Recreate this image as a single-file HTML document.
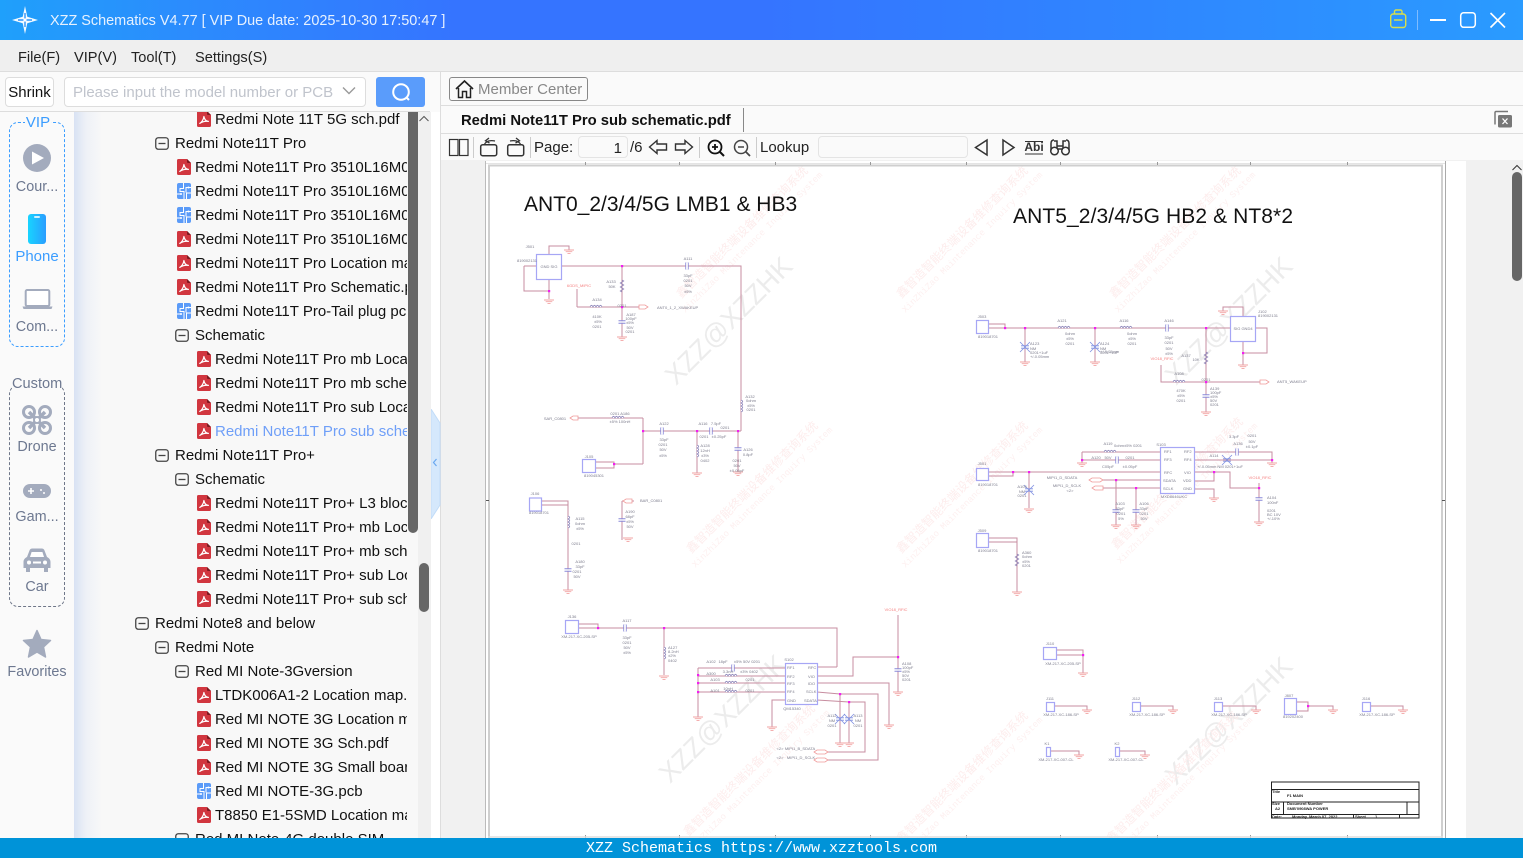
<!DOCTYPE html>
<html lang="en"><head><meta charset="utf-8"><title>XZZ Schematics</title>
<style>
html,body{margin:0;padding:0;width:1523px;height:858px;overflow:hidden;background:#fafafa;font-family:"Liberation Sans","Noto Sans CJK SC",sans-serif;font-size:15px;color:#111}
.a{position:absolute}
#title{left:0;top:0;width:1523px;height:40px;background:linear-gradient(90deg,#1fa0fb 0,#2b8cfd 12%,#3574ff 30%,#3574ff 50%,#2f86ff 75%,#2a9bff 100%)}
#ttext{left:50px;top:12px;line-height:18px;color:#e6f1ff;white-space:nowrap;font-size:14.45px}
#menu{left:0;top:40px;width:1523px;height:31px;background:#efefef;border-bottom:1px solid #ddd}
#menu span{position:absolute;top:9px;line-height:18px;color:#222;white-space:nowrap;font-size:14.6px}
#lp{left:0;top:72px;width:430px;height:39px;background:#fafafa;border-bottom:1px solid #ddd}
.bx{position:absolute;box-sizing:border-box;border:1px solid #ddd;border-radius:4px;background:#fff}
#nav{left:0;top:112px;width:74px;height:726px;background:#fafafa}
#grad{left:74px;top:112px;width:344px;height:726px;background:linear-gradient(90deg,#d8e2f3 0,#eef1f7 12px,#f8f8f8 28px)}
#tree{left:0;top:112px;width:407px;height:726px;overflow:hidden}
#tree .in{margin-top:-5px}
.r{height:24px;line-height:26px;white-space:nowrap;position:relative;color:#111}
.r svg{position:absolute;top:4px;overflow:visible}
.p0{padding-left:215px}.p0 svg{left:197px}
.p1{padding-left:195px}.p1 svg{left:177px}
.b0{padding-left:155px}.b0 svg{left:135px;top:6px}
.b1{padding-left:175px}.b1 svg{left:155px;top:6px}
.b2{padding-left:195px}.b2 svg{left:175px;top:6px}
.nl{position:absolute;left:4px;width:66px;text-align:center;line-height:18px;color:#6d7890;white-space:nowrap;font-size:14.4px}
.sep{position:absolute;top:137px;width:1px;height:21px;background:#ccc}
#status{left:0;top:838px;width:1523px;height:20px;background:#0093d8;color:#fff;text-align:center;font-family:"Liberation Mono",monospace;font-size:15px;line-height:22px;white-space:nowrap;overflow:hidden}
.t{font:4px "Liberation Sans",sans-serif;fill:#7d7d8d}
.c{text-anchor:middle}
.rd{font:4px "Liberation Sans",sans-serif;fill:#f58080;text-anchor:middle}
.wm{font:27px "Liberation Sans",sans-serif;fill:#ececec;text-anchor:middle}
.w1{font:12px "Liberation Sans","Noto Sans CJK SC",sans-serif;fill:#fdeded;text-anchor:middle}
.w2{font:9px "Liberation Mono",monospace;fill:#fdf0f0;text-anchor:middle}
.h{font:21px "Liberation Sans",sans-serif;fill:#111}
</style></head><body>

<svg width="0" height="0" style="position:absolute"><defs>
<symbol id="pdf" viewBox="0 0 14 16" width="14" height="16"><path d="M1.5 0H10L14 4V14.5A1.5 1.5 0 0 1 12.5 16H1.5A1.5 1.5 0 0 1 0 14.5V1.5A1.5 1.5 0 0 1 1.5 0Z" fill="#d1363f"/><path d="M10 0L14 4H11A1 1 0 0 1 10 3Z" fill="#7d1a20"/><path d="M2.8 12.4C4.6 11.3 6.6 8.6 6.9 5.5 7.4 8.2 9 10.2 11.4 10.4 8.8 10 5.3 10.7 2.8 12.4Z" fill="none" stroke="#fff" stroke-width="1.2" stroke-linejoin="round"/></symbol>
<symbol id="pcb" viewBox="0 0 14 16" width="14" height="16"><rect width="14" height="16" rx="2" fill="#5b9bf8"/><path d="M6.500 0V5.500H3V8.500H7V16M14 4.500H9V9.500M0 11H4M14 10H9.500V16" fill="none" stroke="#fff" stroke-width="1"/><circle cx="4" cy="11" r="1" fill="#fff"/><circle cx="11.500" cy="4.500" r="1" fill="#fff"/></symbol>
<symbol id="box" viewBox="0 0 14 13" width="14" height="13"><rect x=".75" y=".75" width="12.5" height="11.5" rx="2.5" fill="none" stroke="#444" stroke-width="1.3"/><path d="M3.5 6.5H10.5" stroke="#444" stroke-width="1.3"/></symbol>
<g id="gnd"><path d="M-5 0H5M-3.3 1.7H3.3M-1.5 3.4H1.5" stroke="#f2a3a3" stroke-width=".9" fill="none"/></g>
<g id="ind"><path d="M-6 0q1.5-3.4 3 0q1.5-3.4 3 0q1.5-3.4 3 0q1.5-3.4 3 0" stroke="#8d84b8" stroke-width=".8" fill="#fff"/></g>
<g id="res"><path d="M-6 0l1-1.7 2 3.4 2-3.4 2 3.4 2-3.4 2 3.4 1-1.7" stroke="#8d84b8" stroke-width=".8" fill="none"/></g>
<g id="cap"><path d="M-1.2-3.5V3.5M1.2-3.5V3.5" stroke="#8888d8" stroke-width="1" fill="none"/><rect x="-.8" y="-3" width="1.6" height="6" fill="#fff"/></g>
<g id="capv"><rect x="-3" y="-.8" width="6" height="1.6" fill="#fff"/><path d="M-3.5-1.2H3.5M-3.5 1.2H3.5" stroke="#8888d8" stroke-width="1" fill="none"/></g>
<g id="nm"><path d="M-5-5L5 5M5-5L-5 5M-4 -1.2H4M-4 1.2H4" stroke="#7f8fe0" stroke-width=".8" fill="none"/></g>
</defs></svg>

<!-- document area -->
<div class="a" style="left:431px;top:112px;width:9px;height:726px;background:#fff"></div>
<div class="a" style="left:440px;top:72px;width:1px;height:766px;background:#ddd"></div>
<div class="a" style="left:418px;top:112px;width:13px;height:726px;background:#f0f0f0"></div>
<div class="a" style="left:441px;top:160px;width:1082px;height:678px;background:#f1f1f1"></div>
<div class="a" style="left:485px;top:161px;width:1px;height:677px;background:#bbb"></div>
<div class="a" style="left:486px;top:161px;width:980px;height:677px;background:#fff"></div>

<svg class="a" style="left:0;top:0" width="1523" height="858" viewBox="0 0 1523 858">
<g>
<text class="wm" transform="translate(728 320) rotate(-45) translate(0 10)">XZZ@XZZHK</text>
<text class="wm" transform="translate(1228 320) rotate(-45) translate(0 10)">XZZ@XZZHK</text>
<text class="wm" transform="translate(722 718) rotate(-45) translate(0 10)">XZZ@XZZHK</text>
<text class="wm" transform="translate(1228 720) rotate(-45) translate(0 10)">XZZ@XZZHK</text>
<g transform="translate(745 235) rotate(-45)"><text class="w1">鑫智造智能终端设备维修查询系统</text><text class="w2" y="13">XinZhiZao Maintenance Inquiry System</text></g>
<g transform="translate(965 235) rotate(-45)"><text class="w1">鑫智造智能终端设备维修查询系统</text><text class="w2" y="13">XinZhiZao Maintenance Inquiry System</text></g>
<g transform="translate(1178 235) rotate(-45)"><text class="w1">鑫智造智能终端设备维修查询系统</text><text class="w2" y="13">XinZhiZao Maintenance Inquiry System</text></g>
<g transform="translate(755 490) rotate(-45)"><text class="w1">鑫智造智能终端设备维修查询系统</text><text class="w2" y="13">XinZhiZao Maintenance Inquiry System</text></g>
<g transform="translate(965 490) rotate(-45)"><text class="w1">鑫智造智能终端设备维修查询系统</text><text class="w2" y="13">XinZhiZao Maintenance Inquiry System</text></g>
<g transform="translate(1180 486) rotate(-45)"><text class="w1">鑫智造智能终端设备维修查询系统</text><text class="w2" y="13">XinZhiZao Maintenance Inquiry System</text></g>
<g transform="translate(752 773) rotate(-45)"><text class="w1">鑫智造智能终端设备维修查询系统</text><text class="w2" y="13">XinZhiZao Maintenance Inquiry System</text></g>
<g transform="translate(965 780) rotate(-45)"><text class="w1">鑫智造智能终端设备维修查询系统</text><text class="w2" y="13">XinZhiZao Maintenance Inquiry System</text></g>
<g transform="translate(1175 780) rotate(-45)"><text class="w1">鑫智造智能终端设备维修查询系统</text><text class="w2" y="13">XinZhiZao Maintenance Inquiry System</text></g>
</g>

<!-- page frame -->
<path d="M486 163.5H1446" stroke="#e4e4e4" stroke-width="1"/>
<path d="M489 166V838M1442 166V838M488 165.5H1443" stroke="#cfcfcf" stroke-width="2" fill="none"/>
<path d="M1445.5 161V838" stroke="#aaa" stroke-width="1"/>
<path d="M585.5 162v3M679.5 162v3M775.5 162v3M870.5 162v3M966.5 162v3M1060.5 162v3M1157.5 162v3M1250.5 162v3M1347.5 162v3" stroke="#999"/>
<path d="M486 500.5h3M1442 500.5h3" stroke="#555"/>
<path d="M585.5 835v3M679.5 835v3M775.5 835v3M870.5 835v3M966.5 835v3M1060.5 835v3M1157.5 835v3M1250.5 835v3M1347.5 835v3" stroke="#999"/>
<path d="M488 837H1443" stroke="#ddd" stroke-width="1.5"/>

<text class="h" x="524" y="211">ANT0_2/3/4/5G LMB1 &amp; HB3</text>
<text class="h" x="1013" y="223" textLength="280">ANT5_2/3/4/5G HB2 &amp; NT8*2</text>

<g style="filter:blur(.35px)">
<!-- wires -->
<g fill="none" stroke="#c78da0" stroke-width="1">
<path d="M562 266H741V431M524 266H536M524 266V291H549M549 279V299M549 254V246H569V250M622 266V337M577 307H643M577 289V307M643 431H741M643 418V464M643 418H577M595 462H614V464H643M595 468H614V464M697 431V473M738 431V472"/>
<path d="M541 501H568V590M541 505H568M622 501H634M622 501V540"/>
<path d="M988 324H1005V328M988 328H1230M1025 328V362M1095 328V362M1256 328H1267V353H1243M1243 341V365M1243 316V307H1223V311M1206 328V412M1161 365V382H1260"/>
<path d="M988 472H1160M988 476H1013V472M1029 472V508M1082 452H1160M1082 452V463M1082 460H1160M1103 480H1160M1103 488H1160M1116 480V525M1136 488V525M1194 452H1272V463M1194 460H1272M1194 472H1230V488H1259M1194 481H1214V472M1194 489H1214V498M1259 483V522"/>
<path d="M988 538H1017V592M988 542H1017"/>
<path d="M578 624H598V628M578 628H837V667M664 628V675M698 668H785M698 668V717M698 676H785M698 683H785M698 692H785M785 700H772V727M817 667H837M817 676H853V657H898M898 615V692M817 683H889V725M817 692L840 694H878V760H825M817 700L849 702H865V752H825M840 694V743M849 702V743"/>
<path d="M1057 650H1083V673M1057 655H1083M1054 706H1087V710M1141 706H1173V710M1223 706H1256V710M1297 702H1308V711H1297M1308 706H1333V710M1371 706H1403V710M1051 751H1079V755M1120 751H1145V755"/>
</g>
<!-- component boxes -->
<g fill="#fff" stroke="#a6a6f5" stroke-width="1.2">
<rect x="536.5" y="254.5" width="25" height="25"/><rect x="582.5" y="459.5" width="13" height="13"/><rect x="529.5" y="498" width="12" height="13"/>
<rect x="976.5" y="320.5" width="12" height="13"/><rect x="1230.5" y="316.5" width="25" height="25"/><rect x="976.5" y="468.5" width="12" height="12"/><rect x="1160.5" y="447.5" width="34" height="46"/><rect x="976.5" y="533.5" width="12" height="14"/>
<rect x="565.5" y="620.5" width="13" height="13"/><rect x="785.5" y="663.5" width="32" height="41"/>
<rect x="1043.5" y="647.5" width="13" height="12"/><rect x="1046.5" y="702.5" width="8" height="9"/><rect x="1132.5" y="702.5" width="8" height="9"/><rect x="1214.5" y="702.5" width="8" height="9"/><rect x="1284.5" y="698.5" width="12" height="16"/><rect x="1362.5" y="702.5" width="8" height="9"/><rect x="1046.5" y="747.5" width="4" height="9"/><rect x="1115.5" y="747.5" width="4" height="9"/>
</g>
<!-- grounds -->
<g>
<use href="#gnd" x="549" y="300"/><use href="#gnd" x="569" y="250"/><use href="#gnd" x="622" y="337"/><use href="#gnd" x="697" y="473"/><use href="#gnd" x="738" y="472"/><use href="#gnd" x="568" y="590"/><use href="#gnd" x="628" y="538"/>
<use href="#gnd" x="1025" y="362"/><use href="#gnd" x="1095" y="362"/><use href="#gnd" x="1243" y="365"/><use href="#gnd" x="1223" y="311"/><use href="#gnd" x="1206" y="412"/>
<use href="#gnd" x="1029" y="509"/><use href="#gnd" x="1082" y="463"/><use href="#gnd" x="1116" y="525"/><use href="#gnd" x="1136" y="525"/><use href="#gnd" x="1272" y="463"/><use href="#gnd" x="1214" y="498"/><use href="#gnd" x="1259" y="522"/><use href="#gnd" x="1017" y="592"/>
<use href="#gnd" x="664" y="676"/><use href="#gnd" x="698" y="717"/><use href="#gnd" x="772" y="727"/><use href="#gnd" x="889" y="725"/><use href="#gnd" x="840" y="743"/><use href="#gnd" x="849" y="743"/><use href="#gnd" x="898" y="692"/>
<use href="#gnd" x="1083" y="673"/><use href="#gnd" x="1087" y="710"/><use href="#gnd" x="1173" y="710"/><use href="#gnd" x="1256" y="710"/><use href="#gnd" x="1333" y="710"/><use href="#gnd" x="1403" y="710"/><use href="#gnd" x="1079" y="755"/><use href="#gnd" x="1145" y="755"/>
</g>
<!-- parts -->
<g>
<use href="#cap" x="687" y="266"/><use href="#capv" x="622" y="322"/><use href="#ind" x="596" y="307"/><use href="#ind" x="618" y="418"/><use href="#cap" x="662" y="431"/><use href="#cap" x="711" y="431"/><use href="#capv" x="738" y="449"/>
<use href="#res" transform="translate(622 286) rotate(90)"/><use href="#ind" transform="translate(741 406) rotate(90)"/><use href="#ind" transform="translate(697 451) rotate(90)"/><use href="#ind" transform="translate(568 522) rotate(90)"/><use href="#capv" x="568" y="570"/><use href="#capv" x="622" y="520"/>
<use href="#ind" x="1064" y="328"/><use href="#ind" x="1126" y="328"/><use href="#cap" x="1167" y="328"/><use href="#nm" x="1025" y="347"/><use href="#nm" x="1095" y="347"/><use href="#res" transform="translate(1206 358) rotate(90)"/><use href="#capv" x="1206" y="396"/><use href="#ind" x="1179" y="382"/>
<use href="#ind" x="1110" y="452"/><use href="#cap" x="1117" y="460"/><use href="#nm" x="1029" y="490"/><use href="#capv" x="1116" y="511"/><use href="#capv" x="1136" y="511"/><use href="#cap" x="1237" y="452"/><use href="#nm" x="1227" y="460"/><use href="#capv" x="1259" y="499"/><use href="#res" transform="translate(1017 560) rotate(90)"/>
<use href="#cap" x="625" y="628"/><use href="#ind" transform="translate(664 653) rotate(90)"/><use href="#cap" x="733" y="668"/><use href="#ind" x="731" y="676"/><use href="#ind" x="731" y="683"/><use href="#ind" x="731" y="692"/><use href="#capv" x="898" y="670"/><use href="#nm" x="840" y="719"/><use href="#nm" x="849" y="719"/>
</g>
<!-- arrows -->
<g fill="#fff" stroke="#f09a9a" stroke-width=".8">
<path d="M639 305H645L648 307 645 309H639Z"/><path d="M570 418L573 416H578V420H573Z"/><path d="M1260 380H1266L1269 382 1266 384H1260Z"/><path d="M1092 478H1100L1103 480 1100 482H1092L1089 480Z"/><path d="M1095 486H1103V490H1095L1092 488Z"/><path d="M817 750H825L828 752 825 754H817L814 752Z"/><path d="M817 758H825L828 760 825 762H817L814 760Z"/><path d="M626 499H632V503H626L623 501Z"/>
</g>
<!-- junctions -->
<g fill="#f21df2">
<rect x="621" y="265" width="2.2" height="2.2"/><rect x="621" y="306" width="2.2" height="2.2"/><rect x="548" y="290" width="2.2" height="2.2"/><rect x="613" y="463" width="2.2" height="2.2"/><rect x="642" y="430" width="2.2" height="2.2"/><rect x="696" y="430" width="2.2" height="2.2"/><rect x="737" y="430" width="2.2" height="2.2"/>
<rect x="1004" y="327" width="2.2" height="2.2"/><rect x="1024" y="327" width="2.2" height="2.2"/><rect x="1094" y="327" width="2.2" height="2.2"/><rect x="1205" y="327" width="2.2" height="2.2"/><rect x="1205" y="381" width="2.2" height="2.2"/><rect x="1242" y="352" width="2.2" height="2.2"/>
<rect x="1012" y="471" width="2.2" height="2.2"/><rect x="1028" y="471" width="2.2" height="2.2"/><rect x="1081" y="459" width="2.2" height="2.2"/><rect x="1115" y="479" width="2.2" height="2.2"/><rect x="1135" y="487" width="2.2" height="2.2"/><rect x="1213" y="471" width="2.2" height="2.2"/><rect x="1271" y="459" width="2.2" height="2.2"/><rect x="1258" y="487" width="2.2" height="2.2"/>
<rect x="597" y="627" width="2.2" height="2.2"/><rect x="663" y="627" width="2.2" height="2.2"/><rect x="697" y="674" width="2.2" height="2.2"/><rect x="697" y="682" width="2.2" height="2.2"/><rect x="697" y="691" width="2.2" height="2.2"/><rect x="897" y="656" width="2.2" height="2.2"/><rect x="839" y="693" width="2.2" height="2.2"/><rect x="848" y="701" width="2.2" height="2.2"/>
<rect x="1082" y="654" width="2.2" height="2.2"/><rect x="1307" y="705" width="2.2" height="2.2"/>
</g>
<!-- labels -->
<g>
<text class="t c" x="530" y="248">J501</text><text class="t c" x="527" y="262">819002131</text><text class="t c" x="549" y="268">GND SIG</text>
<text class="t c" x="611" y="283">A133</text><text class="t c" x="612" y="288">50K</text><text class="t c" x="597" y="301">A134</text><text class="t c" x="597" y="318">410K</text><text class="t c" x="598" y="323">±5%</text><text class="t c" x="597" y="328">0201</text><text class="t c" x="622" y="307">0201</text>
<text class="t c" x="631" y="316">A187</text><text class="t c" x="631" y="320">100pF</text><text class="t c" x="630" y="324">±5%</text><text class="t c" x="630" y="329">50V</text><text class="t c" x="630" y="333">0201</text>
<text class="t c" x="688" y="260">A111</text><text class="t c" x="688" y="277">33pF</text><text class="t c" x="688" y="282">0201</text><text class="t c" x="688" y="287">50V</text><text class="t c" x="688" y="293">±5%</text>
<text class="rd" x="579" y="287">6GDS_MIPIC</text><text class="t" x="657" y="309">ANT0_1_2_XWAKEUP</text>
<text class="t c" x="555" y="420">SAR_C0801</text><text class="t c" x="620" y="415">0201 A186</text><text class="t c" x="620" y="423">±5% 100nH</text>
<text class="t c" x="664" y="425">A122</text><text class="t c" x="664" y="441">33pF</text><text class="t c" x="663" y="446">0201</text><text class="t c" x="663" y="451">50V</text><text class="t c" x="663" y="457">±5%</text>
<text class="t c" x="703" y="425">A116</text><text class="t c" x="716" y="425">7.5pF</text><text class="t c" x="725" y="429">0201</text><text class="t c" x="704" y="438">0201</text><text class="t c" x="719" y="438">±0.25pF</text>
<text class="t c" x="705" y="447">A128</text><text class="t c" x="705" y="452">12nH</text><text class="t c" x="705" y="457">±3%</text><text class="t c" x="705" y="462">0402</text>
<text class="t c" x="748" y="451">A126</text><text class="t c" x="748" y="456">0.8pF</text><text class="t c" x="737" y="462">0201</text><text class="t c" x="737" y="467">50V</text><text class="t c" x="737" y="472">±0.05pF</text>
<text class="t c" x="750" y="398">A132</text><text class="t c" x="751" y="402">0ohm</text><text class="t c" x="751" y="407">±5%</text><text class="t c" x="751" y="411">0201</text>
<text class="t c" x="589" y="458">J105</text><text class="t c" x="594" y="477">819045301</text><text class="t c" x="535" y="495">J106</text><text class="t c" x="539" y="514">819018701</text><text class="t c" x="580" y="520">A115</text><text class="t c" x="580" y="525">0ohm</text><text class="t c" x="580" y="530">±5%</text><text class="t c" x="576" y="545">0201</text><text class="t c" x="580" y="563">A180</text><text class="t c" x="580" y="568">33pF</text><text class="t c" x="577" y="573">0201</text><text class="t c" x="577" y="578">50V</text><text class="t" x="640" y="502">BAR_C0801</text><text class="t c" x="630" y="513">A190</text><text class="t c" x="630" y="518">68pF</text><text class="t c" x="630" y="523">±5%</text><text class="t c" x="630" y="528">50V</text>

<text class="t c" x="982" y="318">J503</text><text class="t c" x="988" y="338">819018701</text><text class="t c" x="1062" y="322">A121</text><text class="t c" x="1070" y="335">0ohm</text><text class="t c" x="1070" y="340">±5%</text><text class="t c" x="1070" y="345">0201</text><text class="t c" x="1124" y="322">A116</text><text class="t c" x="1132" y="335">0ohm</text><text class="t c" x="1132" y="340">±5%</text><text class="t c" x="1132" y="345">0201</text><text class="t c" x="1169" y="322">A146</text><text class="t c" x="1169" y="339">33pF</text><text class="t c" x="1169" y="344">0201</text><text class="t c" x="1169" y="350">50V</text><text class="t c" x="1169" y="355">±5%</text>
<text class="t" x="1030" y="345">A123</text><text class="t" x="1030" y="350">NM</text><text class="t" x="1030" y="354">0201+1uF</text><text class="t" x="1030" y="358">+/-0.05mm</text><text class="t" x="1100" y="345">A124</text><text class="t" x="1100" y="350">NM</text><text class="t" x="1100" y="354">0201+1uF</text><text class="t" x="1100" y="353">+/-0.05mm</text>
<text class="t" x="1258" y="313">J102</text><text class="t" x="1258" y="317">819002131</text><text class="t c" x="1243" y="330">SIG GND4</text><text class="rd" x="1162" y="360">VIO18_RFIC</text><text class="t c" x="1179" y="375">A108</text><text class="t c" x="1181" y="392">470K</text><text class="t c" x="1181" y="397">±5%</text><text class="t c" x="1181" y="402">0201</text><text class="t c" x="1186" y="357">A137</text><text class="t c" x="1196" y="361">10K</text><text class="t c" x="1206" y="381">0201</text><text class="t" x="1210" y="390">A139</text><text class="t" x="1210" y="394">100pF</text><text class="t" x="1210" y="398">±5%</text><text class="t" x="1210" y="402">50V</text><text class="t" x="1210" y="406">0201</text><text class="t" x="1277" y="383">ANT5_WAKEUP</text>

<text class="t c" x="982" y="465">J501</text><text class="t c" x="988" y="486">819018701</text><text class="t c" x="1108" y="445">A119</text><text class="t c" x="1128" y="447">0ohm±5% 0201</text><text class="t c" x="1096" y="459">A120</text><text class="t c" x="1108" y="459">50V</text><text class="t c" x="1130" y="459">0201</text><text class="t c" x="1108" y="468">C05pF</text><text class="t c" x="1130" y="468">±0.05pF</text>
<text class="t c" x="1161" y="446">S103</text><text class="t" x="1164" y="453">RF1</text><text class="t" x="1164" y="461">RF3</text><text class="t" x="1164" y="474">RFC</text><text class="t" x="1163" y="482">SDATA</text><text class="t" x="1163" y="490">SCLK</text><text class="t" x="1184" y="453">RF2</text><text class="t" x="1184" y="461">RF4</text><text class="t" x="1184" y="474">VIO</text><text class="t" x="1183" y="482">VDD</text><text class="t" x="1183" y="490">GND</text><text class="t c" x="1174" y="498">MXD8646UKC</text>
<text class="t c" x="1234" y="438">3.3pF</text><text class="t c" x="1252" y="437">0201</text><text class="t c" x="1238" y="445">A136</text><text class="t c" x="1252" y="443">50V</text><text class="t c" x="1252" y="448">±0.1pF</text><text class="t c" x="1214" y="457">A114</text><text class="t c" x="1220" y="468">+/-0.05mm NM 0201+1uF</text><text class="rd" x="1260" y="479">VIO18_RFIC</text><text class="t" x="1267" y="499">A104</text><text class="t" x="1267" y="504">100nF</text><text class="t" x="1267" y="512">0201</text><text class="t" x="1267" y="516">BC 10V</text><text class="t" x="1267" y="520">+/-10%</text>
<text class="t c" x="1022" y="488">A105</text><text class="t c" x="1022" y="493">NM</text><text class="t c" x="1022" y="497">0201</text><text class="t c" x="1062" y="479">MIPI1_D_SDATA</text><text class="t c" x="1067" y="487">MIPI1_D_SCLK</text><text class="t c" x="1070" y="492">&lt;2&gt;</text><text class="t c" x="1120" y="505">A103</text><text class="t c" x="1120" y="510">33pF</text><text class="t c" x="1121" y="515">0201</text><text class="t c" x="1121" y="520">5%</text><text class="t c" x="1144" y="505">A106</text><text class="t c" x="1144" y="510">33pF</text><text class="t c" x="1144" y="515">0201</text><text class="t c" x="1144" y="520">50V</text>
<text class="t c" x="982" y="532">J509</text><text class="t c" x="988" y="552">819018701</text><text class="t" x="1022" y="554">A360</text><text class="t" x="1022" y="558">0ohm</text><text class="t" x="1022" y="563">±5%</text><text class="t" x="1022" y="567">0201</text>

<text class="t c" x="572" y="618">J136</text><text class="t c" x="579" y="638">XM-217-XC-205-SP</text><text class="t c" x="627" y="622">A117</text><text class="t c" x="627" y="639">33pF</text><text class="t c" x="627" y="644">0201</text><text class="t c" x="627" y="649">50V</text><text class="t c" x="627" y="654">±5%</text><text class="t" x="668" y="649">A127</text><text class="t" x="668" y="653">8.2nH</text><text class="t" x="668" y="657">±2%</text><text class="t" x="668" y="662">0402</text>
<text class="t c" x="711" y="663">A102</text><text class="t c" x="723" y="663">18pF</text><text class="t c" x="747" y="663">±5% 50V 0201</text><text class="t c" x="711" y="675">A300</text><text class="t c" x="728" y="673">3.3nH</text><text class="t c" x="749" y="673">±3%  0402</text><text class="t c" x="715" y="681">A103</text><text class="t c" x="750" y="681">0201</text><text class="t c" x="715" y="692">A101</text><text class="t c" x="728" y="690">10nH</text><text class="t c" x="750" y="692">0201</text>
<text class="t c" x="789" y="661">S102</text><text class="t" x="787" y="669">RF1</text><text class="t" x="787" y="678">RF2</text><text class="t" x="787" y="685">RF3</text><text class="t" x="787" y="693">RF4</text><text class="t" x="787" y="702">GND</text><text class="t" x="808" y="669">RFC</text><text class="t" x="808" y="678">VIO</text><text class="t" x="808" y="685">IDO</text><text class="t" x="806" y="693">SCLK</text><text class="t" x="804" y="702">SDATA</text><text class="t c" x="792" y="710">QM15340</text>
<text class="t c" x="832" y="717">A112</text><text class="t c" x="832" y="722">NM</text><text class="t c" x="832" y="727">0201</text><text class="t c" x="858" y="717">A113</text><text class="t c" x="858" y="722">NM</text><text class="t c" x="858" y="727">0201</text><text class="t c" x="800" y="750">MIPI1_B_SDATA</text><text class="t c" x="801" y="759">MIPI1_D_SCLK</text><text class="t c" x="780" y="750">&lt;2&gt;</text><text class="t c" x="780" y="759">&lt;2&gt;</text>
<text class="rd" x="896" y="611">VIO18_RFIC</text><text class="t" x="902" y="665">A108</text><text class="t" x="902" y="669">100pF</text><text class="t" x="902" y="673">±5%</text><text class="t" x="902" y="677">50V</text><text class="t" x="902" y="681">0201</text>

<text class="t c" x="1050" y="645">J110</text><text class="t c" x="1063" y="665">XM-217-XC-205-SP</text><text class="t c" x="1050" y="700">J111</text><text class="t c" x="1061" y="716">XM-217-XC-186-SP</text><text class="t c" x="1136" y="700">J112</text><text class="t c" x="1147" y="716">XM-217-XC-186-SP</text><text class="t c" x="1218" y="700">J113</text><text class="t c" x="1229" y="716">XM-217-XC-186-SP</text><text class="t c" x="1289" y="697">J807</text><text class="t c" x="1293" y="718">819202400</text><text class="t c" x="1366" y="700">J116</text><text class="t c" x="1377" y="716">XM-217-XC-186-SP</text><text class="t c" x="1047" y="745">K1</text><text class="t c" x="1056" y="761">XM-217-XC-007-CL</text><text class="t c" x="1117" y="745">K2</text><text class="t c" x="1126" y="761">XM-217-XC-007-CL</text>
</g>
</g>
<!-- title block -->
<g fill="none" stroke="#222" stroke-width="1">
<path d="M1271.5 782H1419V818H1271.5ZM1271.5 789.5H1419M1271.5 802H1419M1271.5 814.5H1419M1283.5 802V814.5M1407 802V814.5M1353.5 814.5V818M1399.5 814.5V818"/>
</g>
<g style="font:bold 4px 'Liberation Sans',sans-serif;fill:#222">
<text x="1272" y="793">Title</text><text x="1287" y="797">F1 MAIN</text><text x="1272" y="805">Size</text><text x="1275" y="810">A2</text><text x="1287" y="805">Document Number</text><text x="1287" y="810">SMB'0908WA POWER</text><text x="1272" y="818">Date:</text><text x="1292" y="818">Monday, March 07, 2022</text><text x="1355" y="818">Sheet</text><text x="1375" y="818">1</text>
</g>
</svg>

<!-- Title bar -->
<div class="a" id="title"></div>
<svg class="a" style="left:10px;top:3px" width="32" height="34" viewBox="0 0 32 34"><path d="M15 3L17.3 13.7 28 17 17.3 20.3 15 31 12.7 20.3 2 17 12.7 13.7Z" fill="#fff" opacity=".95"/><path d="M8 17H22M15 10V24" stroke="#2d93fb" stroke-width="1.4"/><circle cx="15" cy="17" r="1.6" fill="#fff"/></svg>
<div class="a" id="ttext">XZZ Schematics V4.77 [ VIP Due date: 2025-10-30 17:50:47 ]</div>
<svg class="a" style="left:1385px;top:5px" width="130" height="30" viewBox="0 0 130 30" fill="none">
<rect x="5.7" y="9" width="15" height="13.5" rx="2.5" stroke="#d8df4c" stroke-width="1.4"/><path d="M9.5 9V6.5A1.5 1.5 0 0 1 11 5H15.5A1.5 1.5 0 0 1 17 6.5V9M9 15H17.5" stroke="#d8df4c" stroke-width="1.4"/>
<path d="M32.5 5V25" stroke="#7fbcff" stroke-width="1"/>
<path d="M45 15H61" stroke="#fff" stroke-width="2"/>
<rect x="75.7" y="7.7" width="14.6" height="14.6" rx="3" stroke="#fff" stroke-width="1.5"/>
<path d="M105.5 8L120 22.5M120 8L105.5 22.5" stroke="#fff" stroke-width="1.6"/>
</svg>

<!-- Menu -->
<div class="a" id="menu"><span style="left:18px">File(F)</span><span style="left:74px">VIP(V)</span><span style="left:131px">Tool(T)</span><span style="left:195px">Settings(S)</span></div>

<!-- Search row -->
<div class="a" id="lp"></div>
<div class="bx" style="left:5px;top:77px;width:49px;height:30px;text-align:center;line-height:30px;color:#111">Shrink</div>
<div class="bx" style="left:64px;top:77px;width:302px;height:30px;line-height:30px;padding-left:8px;color:#c0c4cc;white-space:nowrap">Please input the model number or PCB</div>
<svg class="a" style="left:342px;top:86px" width="14" height="10" viewBox="0 0 14 10"><path d="M1 1.5L7 7.5 13 1.5" fill="none" stroke="#999" stroke-width="1.4"/></svg>
<div class="a" style="left:376px;top:77px;width:49px;height:30px;background:#5a9cfb;border-radius:3px"></div>
<svg class="a" style="left:389px;top:80px" width="24" height="24" viewBox="0 0 24 24"><circle cx="12" cy="12" r="7.8" fill="none" stroke="#fff" stroke-width="2"/><path d="M17.5 17.5L20 20" stroke="#fff" stroke-width="2"/></svg>

<!-- Left nav -->
<div class="a" id="nav"></div>
<div class="a" id="grad"></div>
<div class="a" style="left:9px;top:122px;width:56px;height:225px;box-sizing:border-box;border:1.5px dashed #3b9dff;border-radius:9px"></div>
<div class="a" style="left:25px;top:114px;width:26px;text-align:center;background:#fafafa;color:#3b9dff;line-height:18px">VIP</div>
<svg class="a" style="left:22px;top:143px" width="30" height="30" viewBox="0 0 30 30"><circle cx="15" cy="15" r="14" fill="#a3abbd"/><path d="M10 8.5L22 15 10 21.5Z" fill="#fff"/></svg>
<div class="nl" style="top:178px">Cour...</div>
<div class="a" style="left:28px;top:214px;width:18px;height:30px;border-radius:3px;background:linear-gradient(90deg,#18d4ff,#2a9dff)"></div>
<div class="a" style="left:34px;top:216px;width:6px;height:1.5px;background:#cdf2ff;border-radius:1px"></div>
<div class="nl" style="top:248px;color:#3b9dff;font-size:15px">Phone</div>
<svg class="a" style="left:22px;top:288px" width="31" height="22" viewBox="0 0 31 22"><rect x="3.7" y="2" width="23.6" height="16" rx="1.5" fill="#fff" stroke="#a3abbd" stroke-width="2"/><path d="M.5 18.5H30.5L29.5 21H1.5Z" fill="#a3abbd"/></svg>
<div class="nl" style="top:318px">Com...</div>

<div class="a" style="left:9px;top:385px;width:56px;height:222px;box-sizing:border-box;border:1.5px dashed #6f7789;border-radius:9px"></div>
<div class="a" style="left:12px;top:375px;width:50px;text-align:center;background:#fafafa;color:#6d7890;line-height:18px;font-size:14.6px">Custom</div>
<svg class="a" style="left:22px;top:404px" width="30" height="32" viewBox="0 0 30 32" fill="none"><path d="M7 8L23 24M23 8L7 24" stroke="#a3abbd" stroke-width="3.5"/><circle cx="7" cy="8" r="5.5" stroke="#a3abbd" stroke-width="3"/><circle cx="23" cy="8" r="5.5" stroke="#a3abbd" stroke-width="3"/><circle cx="7" cy="24" r="5.5" stroke="#a3abbd" stroke-width="3"/><circle cx="23" cy="24" r="5.5" stroke="#a3abbd" stroke-width="3"/><circle cx="15" cy="16" r="3" fill="#fff" stroke="#a3abbd" stroke-width="2"/></svg>
<div class="nl" style="top:438px">Drone</div>
<svg class="a" style="left:22px;top:483px" width="30" height="16" viewBox="0 0 30 16"><rect x="1" y="1" width="28" height="14" rx="7" fill="#a3abbd"/><path d="M9 5V11M6 8H12" stroke="#fff" stroke-width="1.6"/><circle cx="19" cy="7" r="1" fill="#fff"/><circle cx="22" cy="10" r="1" fill="#fff"/></svg>
<div class="nl" style="top:508px">Gam...</div>
<svg class="a" style="left:22px;top:547px" width="30" height="26" viewBox="0 0 30 26"><path d="M5 10L7.5 3.5A3 3 0 0 1 10.3 1.5H19.7A3 3 0 0 1 22.5 3.5L25 10C27 11 28.5 12.5 28.5 15V21H26V25H22V21H8V25H4V21H1.5V15C1.5 12.5 3 11 5 10Z" fill="#a3abbd"/><path d="M8 10L9.6 5H20.4L22 10Z" fill="#fff"/><circle cx="7" cy="15.5" r="2" fill="#fff"/><circle cx="23" cy="15.5" r="2" fill="#fff"/><rect x="11" y="14.5" width="8" height="2" fill="#fff"/></svg>
<div class="nl" style="top:578px">Car</div>
<svg class="a" style="left:22px;top:629px" width="30" height="30" viewBox="0 0 30 30"><path d="M15 1.5L19 10.5 28.5 11.5 21.5 18 23.5 28 15 23 6.500 28 8.500 18 1.500 11.500 11 10.500Z" fill="#a3abbd" stroke="#a3abbd" stroke-width="1.500" stroke-linejoin="round"/></svg>
<div class="nl" style="top:663px">Favorites</div>

<!-- Tree -->
<div class="a" id="tree"><div class="in">
<div class="r p0"><svg width="14" height="16"><use href="#pdf"/></svg>Redmi Note 11T 5G sch.pdf</div>
<div class="r b1"><svg width="14" height="13"><use href="#box"/></svg>Redmi Note11T Pro</div>
<div class="r p1"><svg width="14" height="16"><use href="#pdf"/></svg>Redmi Note11T Pro 3510L16M0.pdf</div>
<div class="r p1"><svg width="14" height="16"><use href="#pcb"/></svg>Redmi Note11T Pro 3510L16M0.pcb</div>
<div class="r p1"><svg width="14" height="16"><use href="#pcb"/></svg>Redmi Note11T Pro 3510L16M0.pcb</div>
<div class="r p1"><svg width="14" height="16"><use href="#pdf"/></svg>Redmi Note11T Pro 3510L16M0.pdf</div>
<div class="r p1"><svg width="14" height="16"><use href="#pdf"/></svg>Redmi Note11T Pro Location map.pdf</div>
<div class="r p1"><svg width="14" height="16"><use href="#pdf"/></svg>Redmi Note11T Pro Schematic.pdf</div>
<div class="r p1"><svg width="14" height="16"><use href="#pcb"/></svg>Redmi Note11T Pro-Tail plug pcb</div>
<div class="r b2"><svg width="14" height="13"><use href="#box"/></svg>Schematic</div>
<div class="r p0"><svg width="14" height="16"><use href="#pdf"/></svg>Redmi Note11T Pro mb Location</div>
<div class="r p0"><svg width="14" height="16"><use href="#pdf"/></svg>Redmi Note11T Pro mb schematic</div>
<div class="r p0"><svg width="14" height="16"><use href="#pdf"/></svg>Redmi Note11T Pro sub Location</div>
<div class="r p0" style="color:#6f9ff8"><svg width="14" height="16"><use href="#pdf"/></svg>Redmi Note11T Pro sub schematic</div>
<div class="r b1"><svg width="14" height="13"><use href="#box"/></svg>Redmi Note11T Pro+</div>
<div class="r b2"><svg width="14" height="13"><use href="#box"/></svg>Schematic</div>
<div class="r p0"><svg width="14" height="16"><use href="#pdf"/></svg>Redmi Note11T Pro+ L3 block</div>
<div class="r p0"><svg width="14" height="16"><use href="#pdf"/></svg>Redmi Note11T Pro+ mb Location</div>
<div class="r p0"><svg width="14" height="16"><use href="#pdf"/></svg>Redmi Note11T Pro+ mb schematic</div>
<div class="r p0"><svg width="14" height="16"><use href="#pdf"/></svg>Redmi Note11T Pro+ sub Location</div>
<div class="r p0"><svg width="14" height="16"><use href="#pdf"/></svg>Redmi Note11T Pro+ sub schematic</div>
<div class="r b0"><svg width="14" height="13"><use href="#box"/></svg>Redmi Note8 and below</div>
<div class="r b1"><svg width="14" height="13"><use href="#box"/></svg>Redmi Note</div>
<div class="r b2"><svg width="14" height="13"><use href="#box"/></svg>Red MI Note-3Gversion</div>
<div class="r p0"><svg width="14" height="16"><use href="#pdf"/></svg>LTDK006A1-2 Location map.pdf</div>
<div class="r p0"><svg width="14" height="16"><use href="#pdf"/></svg>Red MI NOTE 3G Location map</div>
<div class="r p0"><svg width="14" height="16"><use href="#pdf"/></svg>Red MI NOTE 3G Sch.pdf</div>
<div class="r p0"><svg width="14" height="16"><use href="#pdf"/></svg>Red MI NOTE 3G Small board</div>
<div class="r p0"><svg width="14" height="16"><use href="#pcb"/></svg>Red MI NOTE-3G.pcb</div>
<div class="r p0"><svg width="14" height="16"><use href="#pdf"/></svg>T8850 E1-5SMD Location map</div>
<div class="r b2"><svg width="14" height="13"><use href="#box"/></svg>Red MI Note-4G double SIM</div>
</div></div>

<!-- tree scrollbars -->
<div class="a" style="left:408px;top:112px;width:10px;height:421px;background:#666;border-radius:0 0 5px 5px"></div>
<svg class="a" style="left:418px;top:114px" width="12" height="10" viewBox="0 0 12 10"><path d="M1.500 7L6 2.500 10.500 7" fill="none" stroke="#555" stroke-width="1"/></svg>
<div class="a" style="left:419px;top:563px;width:10px;height:49px;background:#666;border-radius:5px"></div>
<svg class="a" style="left:431px;top:409px" width="10" height="110" viewBox="0 0 10 110"><path d="M0 0L9 14V96L0 110Z" fill="#d5e8fc" stroke="#c2dcf8" stroke-width="1"/><path d="M5.500 50L2.500 53.500 5.500 57" fill="none" stroke="#6aa8f0" stroke-width="1.200"/></svg>

<!-- right rows -->
<div class="a" style="left:441px;top:72px;width:1082px;height:33px;background:#fafafa;border-bottom:1px solid #ddd"></div>
<div class="a" style="left:441px;top:106px;width:1082px;height:27px;background:#fafafa;border-bottom:1px solid #ddd"></div>
<div class="a" style="left:441px;top:134px;width:1082px;height:26px;background:#fafafa"></div>
<div class="a" style="left:449px;top:77px;width:139px;height:24px;box-sizing:border-box;border:1px solid #888;border-radius:3px;background:#fafafa"></div>
<svg class="a" style="left:455px;top:79px" width="19" height="20" viewBox="0 0 19 20" fill="none"><path d="M1 10L9.500 2 18 10" stroke="#222" stroke-width="1.700"/><path d="M3.500 9V18.500H7.500V12.500H11.500V18.500H15.500V9" stroke="#222" stroke-width="1.500"/></svg>
<div class="a" style="left:478px;top:81px;line-height:18px;color:#888;white-space:nowrap">Member Center</div>
<div class="a" style="left:461px;top:112px;line-height:18px;font-weight:bold;color:#111;white-space:nowrap;font-size:14.8px">Redmi Note11T Pro sub schematic.pdf</div>
<div class="a" style="left:743px;top:108px;width:1px;height:24px;background:#888"></div>
<svg class="a" style="left:1494px;top:110px" width="19" height="18" viewBox="0 0 19 18"><path d="M14 1.500H2A1 1 0 0 0 1 2.500V14.500" fill="none" stroke="#777" stroke-width="1.500"/><rect x="4" y="5" width="14" height="12.500" rx="1.500" fill="#777"/><path d="M8.500 8.500L13.500 14M13.500 8.500L8.500 14" stroke="#fff" stroke-width="1.300"/></svg>

<!-- toolbar -->
<svg class="a" style="left:0;top:0" width="1523" height="170" viewBox="0 0 1523 170" fill="none" stroke="#333">
<rect x="449.500" y="139.500" width="8.500" height="16" stroke-width="1.200"/><rect x="459.500" y="139.500" width="8.500" height="16" stroke-width="1.200"/>
<rect x="480.700" y="144.700" width="16" height="11" rx="2" stroke-width="1.500"/><path d="M484 145C486 141 490 140 495 141M489 138L485.500 140.800 489.500 143" stroke-width="1.300"/>
<rect x="507.700" y="144.700" width="16" height="11" rx="2" stroke-width="1.500"/><path d="M521 145C519 141 515 140 510 141M516 138L519.500 140.800 515.500 143" stroke-width="1.300"/>
<path d="M649.500 147L657 140.500V144H666.500V150H657V153.500Z" stroke-width="1.400"/><path d="M692.500 147L685 140.500V144H675.500V150H685V153.500Z" stroke-width="1.400"/>
<circle cx="715" cy="147" r="6.500" stroke="#111" stroke-width="1.800"/><path d="M712 147H718M715 144V150" stroke="#111" stroke-width="1.800"/><path d="M720 152L724 156" stroke="#111" stroke-width="2"/>
<circle cx="741" cy="147" r="6.500" stroke="#444" stroke-width="1.500"/><path d="M738 147H744" stroke="#444" stroke-width="1.500"/><path d="M746 152L750 156" stroke="#444" stroke-width="1.800"/>
<path d="M975.500 147.500L987 140V155Z" stroke-width="1.500"/><path d="M1014 147.500L1003 140V155Z" stroke-width="1.500"/>
<path d="M1025 141.500H1043M1025 154H1043" stroke="#333" stroke-width="1"/>
<path d="M1054 141H1057V148M1066 141H1063V148M1057 146H1063M1057 149H1063" stroke-width="1.500"/><circle cx="1054.500" cy="151" r="3.800" stroke-width="1.500"/><circle cx="1065.500" cy="151" r="3.800" stroke-width="1.500"/><path d="M1051 150.500V143.500Q1051 140 1054 140M1069 150.500V143.500Q1069 140 1066 140" stroke-width="1.500"/>
</svg>
<div class="sep" style="left:473px"></div><div class="sep" style="left:530px"></div><div class="sep" style="left:699px"></div><div class="sep" style="left:756px"></div>
<div class="a" style="left:534px;top:139px;line-height:18px;white-space:nowrap;color:#222">Page:</div>
<div class="bx" style="left:578px;top:136px;width:50px;height:22px;border-color:#e4e4e4;background:#fafafa;text-align:right;padding-right:5px;line-height:23px;color:#222">1</div>
<div class="a" style="left:630px;top:139px;line-height:18px;color:#222">/6</div>
<div class="a" style="left:760px;top:139px;line-height:18px;color:#222">Lookup</div>
<div class="bx" style="left:818px;top:136px;width:150px;height:22px;border-color:#e4e4e4;background:#fafafa"></div>
<div class="a" style="left:1024px;top:140px;width:20px;text-align:center;font-weight:bold;font-size:12px;line-height:15px;color:#333">Abi</div>

<!-- doc scrollbar -->
<div class="a" style="left:1512px;top:172px;width:10px;height:109px;background:#666;border-radius:5px"></div>
<svg class="a" style="left:1511px;top:164px" width="12" height="8" viewBox="0 0 12 8"><path d="M1.500 6L6 1.500 10.500 6" fill="none" stroke="#333" stroke-width="1"/></svg>

<div class="a" id="status">XZZ Schematics https://www.xzztools.com</div>
</body></html>
